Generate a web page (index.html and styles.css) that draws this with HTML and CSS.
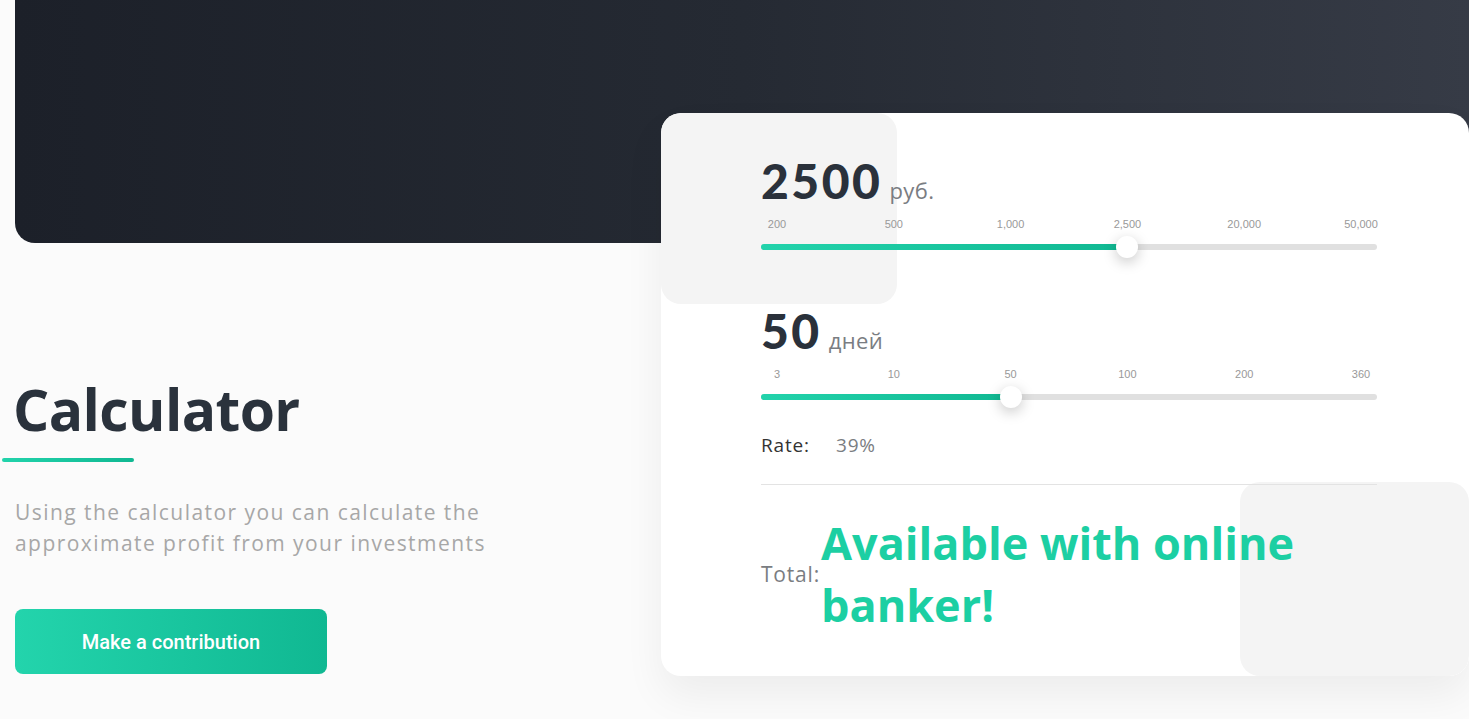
FILE: index.html
```html
<!DOCTYPE html>
<html lang="en">
<head>
<meta charset="utf-8">
<title>Calculator</title>
<link rel="stylesheet" href="styles.css">
</head>
<body>
<div class="page">
  <div class="hero"></div>
  <main class="main">
    <section class="intro">
      <h1 class="title">Calculator</h1>
      <div class="title-line"></div>
      <p class="desc">Using the calculator you can calculate the approximate profit from your investments</p>
      <button class="btn">Make a contribution</button>
    </section>
    <section class="card">
      <div class="deco deco-top"></div>
      <div class="deco deco-bottom"></div>
      <div class="card-body">
        <div class="value-row"><span class="value">2500</span><span class="unit">руб.</span></div>
        <div class="ticks">
          <span class="tick"><span>200</span></span>
          <span class="tick"><span>500</span></span>
          <span class="tick"><span>1,000</span></span>
          <span class="tick"><span>2,500</span></span>
          <span class="tick"><span>20,000</span></span>
          <span class="tick"><span>50,000</span></span>
        </div>
        <div class="slider">
          <div class="track"><div class="fill" style="width:59.4%"><span class="thumb"></span></div></div>
        </div>

        <div class="value-row second"><span class="value">50</span><span class="unit">дней</span></div>
        <div class="ticks">
          <span class="tick"><span>3</span></span>
          <span class="tick"><span>10</span></span>
          <span class="tick"><span>50</span></span>
          <span class="tick"><span>100</span></span>
          <span class="tick"><span>200</span></span>
          <span class="tick"><span>360</span></span>
        </div>
        <div class="slider">
          <div class="track"><div class="fill" style="width:40.6%"><span class="thumb"></span></div></div>
        </div>

        <div class="rate"><span class="rate-label">Rate:</span><span class="rate-value">39%</span></div>
        <div class="divider"></div>
        <div class="total"><span class="total-label">Total:</span><span class="total-value">Available with online banker!</span></div>
      </div>
    </section>
  </main>
</div>
</body>
</html>
```
FILE: styles.css
```css
* { box-sizing: border-box; }
html, body { margin: 0; padding: 0; }
body {
  background: #fbfbfb;
  font-family: "Open Sans", "Liberation Sans", sans-serif;
  overflow: hidden;
  height: 719px;
}
.page { width: 1469px; }
.hero {
  margin-left: 15px;
  height: 243px;
  border-bottom-left-radius: 20px;
  background: linear-gradient(90deg, #1c2029 0%, #252a33 50%, #363b46 100%);
}
.main {
  display: flex;
  align-items: flex-end;
  margin-top: -130px;
  padding-left: 15px;
}
.intro {
  width: 646px;
  flex: none;
  display: flex;
  flex-direction: column;
  align-items: flex-start;
  margin-bottom: 2px;
}
.title {
  margin: 0 0 0 -2px;
  font-family: "Open Sans", sans-serif;
  font-weight: 700;
  font-size: 57px;
  line-height: 70px;
  color: #2a323c;
  letter-spacing: -0.6px;
}
.title-line {
  width: 132px;
  height: 4px;
  border-radius: 2px;
  margin-left: -13px;
  margin-top: 14px;
  background: linear-gradient(90deg, #22d3ab, #10b892);
}
.desc {
  margin: 35px 0 0;
  width: 520px;
  font-size: 21px;
  line-height: 31px;
  color: #a7a7a7;
  font-weight: 400;
  letter-spacing: 1.45px;
}
.btn {
  margin-top: 50px;
  width: 312px;
  height: 65px;
  border: 0;
  border-radius: 8px;
  background: linear-gradient(90deg, #23d4ac 0%, #10b892 100%);
  color: #fff;
  font-family: "Roboto", sans-serif;
  font-weight: 500;
  font-size: 20px;
  cursor: pointer;
}
.card {
  position: relative;
  flex: 1;
  background: #fff;
  border-radius: 20px;
  box-shadow: 0 20px 40px rgba(0, 0, 0, 0.06);
  overflow: hidden;
}
.deco {
  position: absolute;
  background: #f4f4f4;
  border-radius: 20px;
}
.deco-top { left: 0; top: 0; width: 236px; height: 191px; }
.deco-bottom { right: 0; bottom: 0; width: 229px; height: 194px; }
.card-body {
  position: relative;
  padding: 40px 92px 40px 100px;
}
.value-row {
  display: flex;
  align-items: baseline;
  height: 56px;
  line-height: 56px;
}
.value-row.second { margin-top: 45px; }
.value {
  font-family: "Lato", sans-serif;
  font-weight: 900;
  font-size: 48px;
  color: #2a313b;
  letter-spacing: 2.5px;
}
.unit {
  margin-left: 7px;
  font-size: 22px;
  color: #7a7d82;
  font-weight: 400;
  letter-spacing: 0.4px;
}
.ticks {
  display: flex;
  justify-content: space-between;
  padding: 0 16px;
  margin-top: 8px;
  height: 14px;
  line-height: 14px;
}
.tick {
  width: 0;
  display: flex;
  justify-content: center;
  white-space: nowrap;
  font-family: "Liberation Sans", Arial, sans-serif;
  font-size: 11px;
  color: #999;
}
.slider {
  height: 22px;
  margin-top: 5px;
  display: flex;
  align-items: center;
}
.track {
  width: 100%;
  height: 6px;
  border-radius: 3px;
  background: #e0e0e0;
}
.fill {
  position: relative;
  height: 100%;
  border-radius: 3px;
  background: linear-gradient(90deg, #22d3ab, #10b892);
}
.thumb {
  position: absolute;
  right: -11px;
  top: -8px;
  width: 22px;
  height: 22px;
  border-radius: 50%;
  background: #fff;
  box-shadow: 0 4px 14px rgba(0, 0, 0, 0.22);
}
.rate {
  margin-top: 25px;
  height: 24px;
  line-height: 24px;
  font-size: 19px;
  letter-spacing: 0.8px;
  display: flex;
}
.rate-label { color: #333; width: 75px; }
.rate-value { color: #7a7d82; }
.divider {
  margin-top: 27px;
  height: 1px;
  background: #e3e3e3;
}
.total {
  margin-top: 27px;
  display: flex;
  align-items: center;
}
.total-label {
  font-size: 21px;
  letter-spacing: 0.8px;
  color: #7a7d82;
  margin-right: 1px;
}
.total-value {
  font-weight: 700;
  font-size: 45px;
  line-height: 62px;
  color: #1ccfa3;
  letter-spacing: 0px;
}
```
